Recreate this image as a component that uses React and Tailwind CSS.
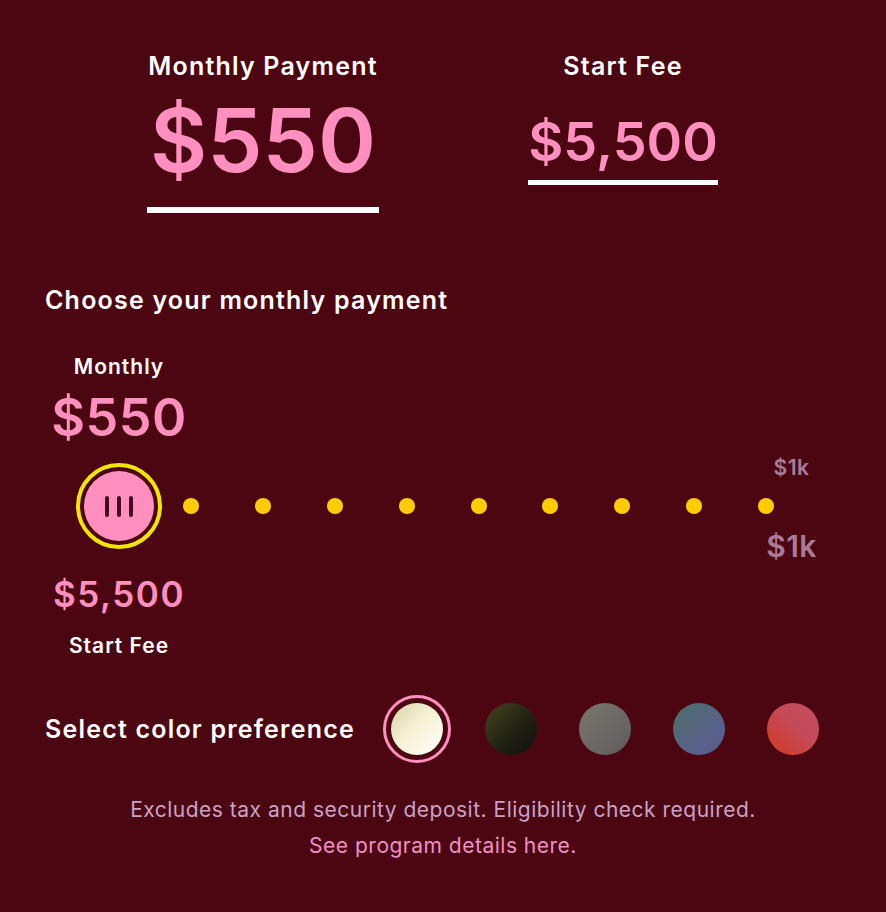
import React from "react";

const swatches = [
  { id: "cream", cls: "bg-[linear-gradient(135deg,#d6d2a8,#f6f1d2_45%,#ffffff)]" },
  { id: "black", cls: "bg-[linear-gradient(135deg,#45451f,#1e1e12_60%,#111)]" },
  { id: "gray", cls: "bg-[linear-gradient(135deg,#7a786a,#5e5a5e)]" },
  { id: "blue", cls: "bg-[linear-gradient(135deg,#4d6e66,#586288_60%,#5a5a8c)]" },
  { id: "red", cls: "bg-[linear-gradient(45deg,#d4381e,#c44a58_55%,#c25060)]" },
];

function Knob() {
  return (
    <div className="w-[86px] h-[86px] rounded-full border-4 border-[#f2e600] flex items-center justify-center">
      <div className="w-[70px] h-[70px] rounded-full bg-[#ff8fbe] flex items-center justify-center gap-[8px]">
        <span className="w-[4px] h-[21px] bg-[#4a0a1e] rounded-sm" />
        <span className="w-[4px] h-[21px] bg-[#4a0a1e] rounded-sm" />
        <span className="w-[4px] h-[21px] bg-[#4a0a1e] rounded-sm" />
      </div>
    </div>
  );
}

export default function App() {
  const font = { fontFamily: "Inter, 'Noto Sans', sans-serif" };
  return (
    <div className="w-[886px] h-[912px] bg-[#4b0611] text-white overflow-hidden" style={font}>
      {/* top summary */}
      <div className="flex items-start pl-[147px] pt-[50px] gap-[149px]">
        <div className="flex flex-col items-center w-[232px]">
          <div className="text-[25px] leading-[32px] font-semibold tracking-[1.2px] whitespace-nowrap">Monthly Payment</div>
          <div className="mt-[14px] text-[88px] leading-none font-semibold text-[#ff8fbe]">$550</div>
          <div className="mt-[23px] w-[232px] h-[6px] bg-white" />
        </div>
        <div className="flex flex-col items-center w-[190px]">
          <div className="text-[25px] leading-[32px] font-semibold tracking-[1.2px] whitespace-nowrap">Start Fee</div>
          <div className="mt-[33px] text-[54px] leading-none font-semibold text-[#ff8fbe]">$5,500</div>
          <div className="mt-[11px] w-[190px] h-[5px] bg-white" />
        </div>
      </div>

      {/* slider */}
      <div className="px-[45px] mt-[71px]">
        <div className="text-[25px] leading-[32px] font-semibold tracking-[1.2px]">Choose your monthly payment</div>
        <div className="flex items-start mt-[37px]">
          <div className="flex flex-col items-center w-[128px] ml-[10px]">
            <div className="text-[21px] leading-[28px] font-semibold tracking-[1px]">Monthly</div>
            <div className="mt-[11px] text-[52px] leading-none font-semibold tracking-[0.5px] text-[#ff8fbe]">$550</div>
            <div className="mt-[19px]"><Knob /></div>
            <div className="mt-[28px] text-[35px] leading-none font-semibold tracking-[1.5px] text-[#ff8fbe]">$5,500</div>
            <div className="mt-[20px] text-[21px] leading-[28px] font-semibold tracking-[1px] whitespace-nowrap">Start Fee</div>
          </div>
          <div className="flex gap-[55.9px] mt-[145px]">
            {Array.from({ length: 9 }).map((_, i) => (
              <span key={i} className="w-4 h-4 rounded-full bg-[#ffcc00]" />
            ))}
          </div>
          <div className="flex flex-col items-center ml-[-8px] text-[#a87c98] font-semibold">
            <div className="mt-[101px] text-[21px] leading-[28px] tracking-[0.5px]">$1k</div>
            <div className="mt-[46px] text-[30px] leading-[36px] tracking-[0.5px]">$1k</div>
          </div>
        </div>

        {/* colors */}
        <div className="flex items-center mt-[35px]">
          <div className="text-[25px] leading-[32px] font-semibold tracking-[1.2px] whitespace-nowrap">Select color preference</div>
          <div className="flex items-center gap-[26px] ml-[28px]">
            {swatches.map((s, i) => (
              <div
                key={s.id}
                className={
                  i === 0
                    ? "w-[68px] h-[68px] rounded-full border-[3px] border-[#ff8fbe] flex items-center justify-center"
                    : "w-[68px] h-[68px] flex items-center justify-center"
                }
              >
                <div className={"w-[52px] h-[52px] rounded-full " + s.cls} />
              </div>
            ))}
          </div>
        </div>
      </div>

      {/* footer */}
      <div className="mt-[29px] flex flex-col items-center text-[21px] leading-[36px] tracking-[0.5px]">
        <div className="text-[#c8a2c8]">Excludes tax and security deposit. Eligibility check required.</div>
        <div className="text-[#f28ec6]">See program details here.</div>
      </div>
    </div>
  );
}
